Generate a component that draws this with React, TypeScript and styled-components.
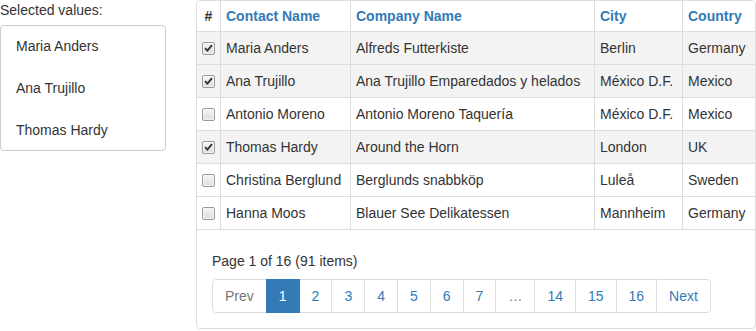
import React from "react";
import styled, { createGlobalStyle } from "styled-components";

const GlobalStyle = createGlobalStyle`
  html, body { margin: 0; padding: 0; background: #fff; }
  body {
    font-family: "Liberation Sans", Arial, Helvetica, sans-serif;
    font-size: 14px;
    color: #333;
  }
  * { box-sizing: border-box; }
`;

const Page = styled.div`
  display: flex;
  align-items: flex-start;
  gap: 30px;
`;

const Side = styled.div`
  width: 166px;
  display: flex;
  flex-direction: column;
`;

const Label = styled.div`
  line-height: 20px;
  height: 20px;
  margin-bottom: 5px;
`;

const ListBox = styled.ul`
  list-style: none;
  margin: 0;
  padding: 0;
  height: 126px;
  border: 1px solid #ccc;
  border-radius: 4px;
  overflow: hidden;
`;

const ListItem = styled.li`
  height: 42px;
  line-height: 40px;
  padding: 0 15px;
  color: #333;
  white-space: nowrap;
`;

const Panel = styled.div`
  width: 560px;
  height: 329px;
  border: 1px solid #ddd;
  border-radius: 4px;
  display: flex;
  flex-direction: column;
  overflow: hidden;
`;

const Row = styled.div<{ $head?: boolean; $selected?: boolean }>`
  display: grid;
  grid-template-columns: 24px 130px 244px 88px 72px;
  height: ${(p) => (p.$head ? 31 : 33)}px;
  border-bottom: 1px solid #ddd;
  background: ${(p) => (p.$selected ? "#f3f3f3" : "#fff")};
`;

const Cell = styled.div<{ $head?: boolean; $center?: boolean; $last?: boolean }>`
  display: flex;
  align-items: center;
  justify-content: ${(p) => (p.$center ? "center" : "flex-start")};
  padding: 0 ${(p) => (p.$center ? 0 : 5)}px;
  border-right: ${(p) => (p.$last ? "none" : "1px solid #ddd")};
  white-space: nowrap;
  overflow: hidden;
  line-height: 16px;
  font-weight: ${(p) => (p.$head ? "bold" : "normal")};
  color: ${(p) => (p.$head ? "#337ab7" : "#333")};
`;

const HashCell = styled(Cell)`
  color: #333;
`;

const Box = styled.span<{ $checked?: boolean }>`
  width: 13px;
  height: 13px;
  border: 1px solid #9a9a9a;
  border-radius: 2px;
  background: linear-gradient(#f4f4f4, #dedede);
  display: flex;
  align-items: center;
  justify-content: center;
  box-shadow: inset 0 0 0 1px rgba(255, 255, 255, 0.6);
`;

const Footer = styled.div`
  padding: 21px 15px 15px;
  display: flex;
  flex-direction: column;
  align-items: flex-start;
`;

const PageInfo = styled.div`
  line-height: 20px;
  margin-bottom: 8px;
  color: #333;
`;

const Pager = styled.ul`
  display: flex;
  list-style: none;
  margin: 0;
  padding: 0;
`;

const PageLink = styled.li<{ $active?: boolean; $disabled?: boolean }>`
  padding: 6px 12px;
  line-height: 20px;
  border: 1px solid ${(p) => (p.$active ? "#337ab7" : "#ddd")};
  margin-left: -1px;
  background: ${(p) => (p.$active ? "#337ab7" : "#fff")};
  color: ${(p) => (p.$active ? "#fff" : p.$disabled ? "#777" : "#337ab7")};
  position: relative;
  z-index: ${(p) => (p.$active ? 2 : 0)};
  &:first-child {
    margin-left: 0;
    border-radius: 4px 0 0 4px;
  }
  &:last-child {
    border-radius: 0 4px 4px 0;
  }
`;

const Check = () => (
  <svg width="9" height="8" viewBox="0 0 9 8">
    <path d="M1 4.2 L3.4 6.6 L8 1.2" fill="none" stroke="#333" strokeWidth="1.9" />
  </svg>
);

const data = [
  { name: "Maria Anders", company: "Alfreds Futterkiste", city: "Berlin", country: "Germany", sel: true },
  { name: "Ana Trujillo", company: "Ana Trujillo Emparedados y helados", city: "México D.F.", country: "Mexico", sel: true },
  { name: "Antonio Moreno", company: "Antonio Moreno Taquería", city: "México D.F.", country: "Mexico", sel: false },
  { name: "Thomas Hardy", company: "Around the Horn", city: "London", country: "UK", sel: true },
  { name: "Christina Berglund", company: "Berglunds snabbköp", city: "Luleå", country: "Sweden", sel: false },
  { name: "Hanna Moos", company: "Blauer See Delikatessen", city: "Mannheim", country: "Germany", sel: false },
];

const pages: { label: string; active?: boolean; disabled?: boolean }[] = [
  { label: "Prev", disabled: true },
  { label: "1", active: true },
  { label: "2" },
  { label: "3" },
  { label: "4" },
  { label: "5" },
  { label: "6" },
  { label: "7" },
  { label: "…", disabled: true },
  { label: "14" },
  { label: "15" },
  { label: "16" },
  { label: "Next" },
];

export default function App() {
  return (
    <>
      <GlobalStyle />
      <Page>
        <Side>
          <Label>Selected values:</Label>
          <ListBox>
            {data.filter((d) => d.sel).map((d) => (
              <ListItem key={d.name}>{d.name}</ListItem>
            ))}
          </ListBox>
        </Side>
        <Panel>
          <Row $head>
            <HashCell $head $center>#</HashCell>
            <Cell $head>Contact Name</Cell>
            <Cell $head>Company Name</Cell>
            <Cell $head>City</Cell>
            <Cell $head $last>Country</Cell>
          </Row>
          {data.map((d) => (
            <Row key={d.name} $selected={d.sel}>
              <Cell $center>
                <Box $checked={d.sel} role="checkbox" aria-checked={d.sel}>
                  {d.sel && <Check />}
                </Box>
              </Cell>
              <Cell>{d.name}</Cell>
              <Cell>{d.company}</Cell>
              <Cell>{d.city}</Cell>
              <Cell $last>{d.country}</Cell>
            </Row>
          ))}
          <Footer>
            <PageInfo>Page 1 of 16 (91 items)</PageInfo>
            <Pager>
              {pages.map((p) => (
                <PageLink key={p.label} $active={p.active} $disabled={p.disabled}>
                  {p.label}
                </PageLink>
              ))}
            </Pager>
          </Footer>
        </Panel>
      </Page>
    </>
  );
}
